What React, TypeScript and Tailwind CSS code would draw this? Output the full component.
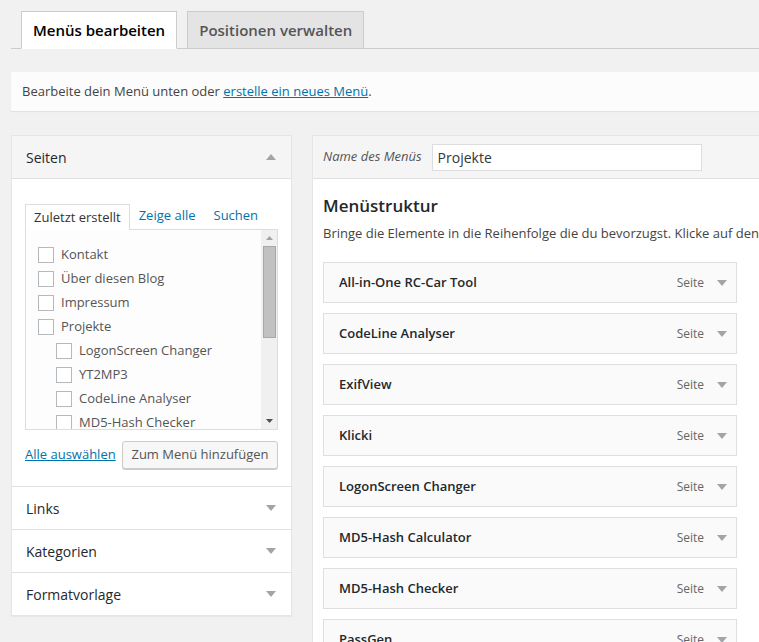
import React from 'react';

const pages: { label: string; indent?: boolean }[] = [
  { label: 'Kontakt' },
  { label: 'Über diesen Blog' },
  { label: 'Impressum' },
  { label: 'Projekte' },
  { label: 'LogonScreen Changer', indent: true },
  { label: 'YT2MP3', indent: true },
  { label: 'CodeLine Analyser', indent: true },
  { label: 'MD5-Hash Checker', indent: true },
];

const menuItems = [
  'All-in-One RC-Car Tool',
  'CodeLine Analyser',
  'ExifView',
  'Klicki',
  'LogonScreen Changer',
  'MD5-Hash Calculator',
  'MD5-Hash Checker',
  'PassGen',
];

const Arrow: React.FC<{ up?: boolean }> = ({ up }) => (
  <svg width="10" height="6" viewBox="0 0 10 6" className="shrink-0">
    {up ? <path d="M0 6 L5 0 L10 6 Z" fill="#a0a5aa" /> : <path d="M0 0 L10 0 L5 6 Z" fill="#a0a5aa" />}
  </svg>
);

const CollapsedBox: React.FC<{ title: string }> = ({ title }) => (
  <div className="h-[43px] border-t border-[#e1e1e1] flex items-center justify-between pl-[14px] pr-[15px]">
    <span className="text-[14px] text-[#23282d]">{title}</span>
    <Arrow />
  </div>
);

const App: React.FC = () => {
  return (
    <div className="w-[759px] h-[642px] overflow-hidden bg-[#f1f1f1] text-[#444] font-['Open_Sans',sans-serif]">
      {/* nav tabs */}
      <div className="pt-[11px] pl-[11px]">
        <div className="flex items-end border-b border-[#ccc] pl-[10px] h-[38px]">
          <div className="h-[38px] px-[11px] flex items-center bg-white border border-[#ccc] border-b-white -mb-px text-[15px] font-semibold text-black">
            Menüs bearbeiten
          </div>
          <div className="h-[37px] ml-[10px] px-[11px] flex items-center bg-[#e4e4e4] border border-[#ccc] border-b-0 text-[15px] font-semibold text-[#555]">
            Positionen verwalten
          </div>
        </div>
      </div>

      {/* notice */}
      <div className="mt-[23px] ml-[11px] h-[39px] bg-[#fcfcfc] shadow-[0_1px_1px_rgba(0,0,0,0.06)] flex items-center px-[11px] text-[13px] text-[#444]">
        Bearbeite dein Menü unten oder&nbsp;<span className="text-[#0073aa] underline">erstelle ein neues Menü</span>.
      </div>

      <div className="flex items-start mt-[24px] ml-[11px] gap-[20px]">
        {/* left column */}
        <div className="w-[281px] shrink-0 bg-white border border-[#e5e5e5] shadow-[0_1px_1px_rgba(0,0,0,0.04)]">
          <div className="h-[43px] bg-[#f5f5f5] border-b border-[#e1e1e1] flex items-center justify-between pl-[14px] pr-[15px]">
            <span className="text-[14px] text-[#23282d]">Seiten</span>
            <Arrow up />
          </div>
          <div className="px-[13px] pt-[24px] pb-[17px]">
            <div className="flex items-end text-[13px]">
              <div className="h-[26px] px-[8px] flex items-center border border-[#ddd] border-b-0 bg-white text-[#333] relative top-px">
                Zuletzt erstellt
              </div>
              <div className="px-[9px] text-[#0073aa] pb-[4px]">Zeige alle</div>
              <div className="px-[9px] text-[#0073aa] pb-[4px]">Suchen</div>
            </div>
            <div className="h-[201px] border border-[#ddd] bg-[#fdfdfd] flex overflow-hidden">
              <div className="flex-1 pl-[12px] pt-[13px]">
                {pages.map((p) => (
                  <div key={p.label} className={`h-[24px] flex items-center ${p.indent ? 'pl-[18px]' : ''}`}>
                    <span className="w-[16px] h-[16px] border border-[#b4b9be] bg-white shrink-0" />
                    <span className="ml-[7px] text-[13px] text-[#555]">{p.label}</span>
                  </div>
                ))}
              </div>
              <div className="w-[16px] bg-[#f0f0f0] flex flex-col items-center">
                <div className="h-[16px] flex items-center justify-center">
                  <svg width="7" height="4" viewBox="0 0 7 4"><path d="M0 4 L3.5 0 L7 4 Z" fill="#a3a3a3" /></svg>
                </div>
                <div className="w-[13px] h-[92px] bg-[#c1c1c1] border border-[#a8a8a8]" />
                <div className="flex-1" />
                <div className="h-[16px] flex items-center justify-center">
                  <svg width="7" height="4" viewBox="0 0 7 4"><path d="M0 0 L7 0 L3.5 4 Z" fill="#505050" /></svg>
                </div>
              </div>
            </div>
            <div className="flex items-center justify-between mt-[11px]">
              <span className="text-[13px] text-[#0073aa] underline whitespace-nowrap">Alle auswählen</span>
              <div className="h-[28px] w-[156px] shrink-0 justify-center flex items-center whitespace-nowrap border border-[#ccc] rounded-[3px] bg-[#f7f7f7] shadow-[0_1px_0_#ccc] text-[13px] text-[#555]">
                Zum Menü hinzufügen
              </div>
            </div>
          </div>
          <CollapsedBox title="Links" />
          <CollapsedBox title="Kategorien" />
          <CollapsedBox title="Formatvorlage" />
        </div>

        {/* right column */}
        <div className="flex-1 bg-white border border-[#e5e5e5] border-r-0 h-[520px]">
          <div className="h-[43px] bg-[#f5f5f5] border-b border-[#e1e1e1] flex items-center pl-[10px]">
            <span className="text-[13px] italic text-[#555]">Name des Menüs</span>
            <div className="ml-[10px] w-[270px] h-[27px] border border-[#ddd] bg-white flex items-center px-[5px] text-[14px] text-[#32373c]">
              Projekte
            </div>
          </div>
          <div className="pl-[10px] pt-[16px]">
            <h3 className="text-[17px] font-semibold text-[#23282d] leading-[22px]">Menüstruktur</h3>
            <p className="mt-[7px] text-[13px] text-[#444] whitespace-nowrap leading-[18px]">
              Bringe die Elemente in die Reihenfolge die du bevorzugst. Klicke auf den Pfeil rechts neben dem Element.
            </p>
            <div className="mt-[20px] flex flex-col gap-[10px]">
              {menuItems.map((m) => (
                <div key={m} className="w-[414px] h-[41px] shrink-0 border border-[#dfdfdf] bg-[#fafafa] flex items-center pl-[15px] pr-[9px]">
                  <span className="flex-1 text-[13px] font-semibold text-[#23282d]">{m}</span>
                  <span className="text-[12px] text-[#666]">Seite</span>
                  <span className="ml-[13px]"><Arrow /></span>
                </div>
              ))}
            </div>
          </div>
        </div>
      </div>
    </div>
  );
};

export default App;
